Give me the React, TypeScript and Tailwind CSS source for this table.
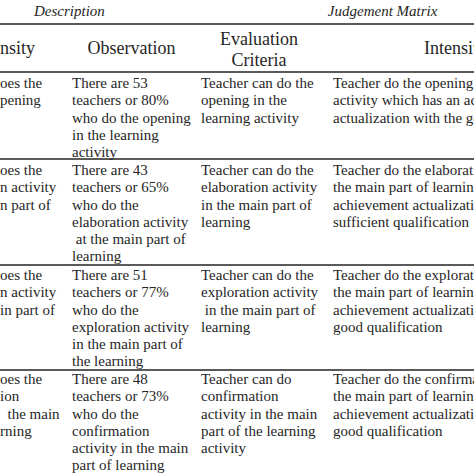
const ROWS: { h: string; pt: string; cells: string[][] }[] = [
  {
    h: 'h-[87px]',
    pt: 'pt-[2px]',
    cells: [
      ['oes the', 'pening'],
      ['There are 53', 'teachers or 80%', 'who do the opening', 'in the learning', 'activity'],
      ['Teacher can do the', 'opening in the', 'learning activity'],
      ['Teacher do the opening', 'activity which has an achievement', 'actualization with the good'],
    ],
  },
  {
    h: 'h-[106px]',
    pt: 'pt-[2px]',
    cells: [
      ['oes the', 'n activity', 'n part of'],
      ['There are 43', 'teachers or 65%', 'who do the', 'elaboration activity', '\u00a0at the main part of', 'learning'],
      ['Teacher can do the', 'elaboration activity', 'in the main part of', 'learning'],
      ['Teacher do the elaboration activity in', 'the main part of learning which has', 'achievement actualization with the', 'sufficient qualification'],
    ],
  },
  {
    h: 'h-[105px]',
    pt: 'pt-[1px]',
    cells: [
      ['oes the', 'n activity', 'in part of'],
      ['There are 51', 'teachers or 77%', 'who do the', 'exploration activity', 'in the main part of', 'the learning'],
      ['Teacher can do the', 'exploration activity', '\u00a0in the main part of', 'learning'],
      ['Teacher do the exploration activity in', 'the main part of learning which has', 'achievement actualization with the', 'good qualification'],
    ],
  },
  {
    h: 'h-[110px]',
    pt: 'pt-0',
    cells: [
      ['oes the', 'ion', '\u00a0\u00a0the main', 'rning'],
      ['There are 48', 'teachers or 73%', 'who do the', 'confirmation', 'activity in the main', 'part of learning'],
      ['Teacher can do', 'confirmation', 'activity in the main', 'part of the learning', 'activity'],
      ['Teacher do the confirmation activity in', 'the main part of learning which has', 'achievement actualization with the', 'good qualification'],
    ],
  },
]

const PAD = ['pl-0', 'pl-[5px]', 'pl-[5px]', 'pl-[5px]']

export default function App() {
  return (
    <div className="w-[474px] h-[474px] overflow-hidden bg-white text-[#262626] font-['Liberation_Serif',serif]">
      {/* group titles */}
      <div className="h-[23px] flex items-center italic text-[15px] whitespace-nowrap">
        <span className="pl-[34px]">Description</span>
        <span className="pl-[223px]">Judgement Matrix</span>
      </div>

      {/* column headers */}
      <div className="border-t-2 border-b-2 border-[#5a5a5a] h-[50px] grid grid-cols-[67px_129px_132px_1fr] items-center text-[18px] leading-[21px] whitespace-nowrap">
        <div>nsity</div>
        <div className="text-center">Observation</div>
        <div className="text-center pr-[6px] pt-[3px]">
          <div>Evaluation</div>
          <div>Criteria</div>
        </div>
        <div className="pl-[96px]">Intensity</div>
      </div>

      {/* body rows */}
      {ROWS.map((row, i) => (
        <div key={i}
          className={`${row.h} ${row.pt} ${i < ROWS.length - 1 ? 'border-b-2 border-[#5a5a5a]' : ''} grid grid-cols-[67px_129px_132px_1fr] text-[15px] leading-[17.3px] whitespace-nowrap`}>
          {row.cells.map((lines, j) => (
            <div key={j} className={`${PAD[j]} min-w-0`}>
              {lines.map((l, k) => <div key={k}>{l}</div>)}
            </div>
          ))}
        </div>
      ))}
    </div>
  )
}
